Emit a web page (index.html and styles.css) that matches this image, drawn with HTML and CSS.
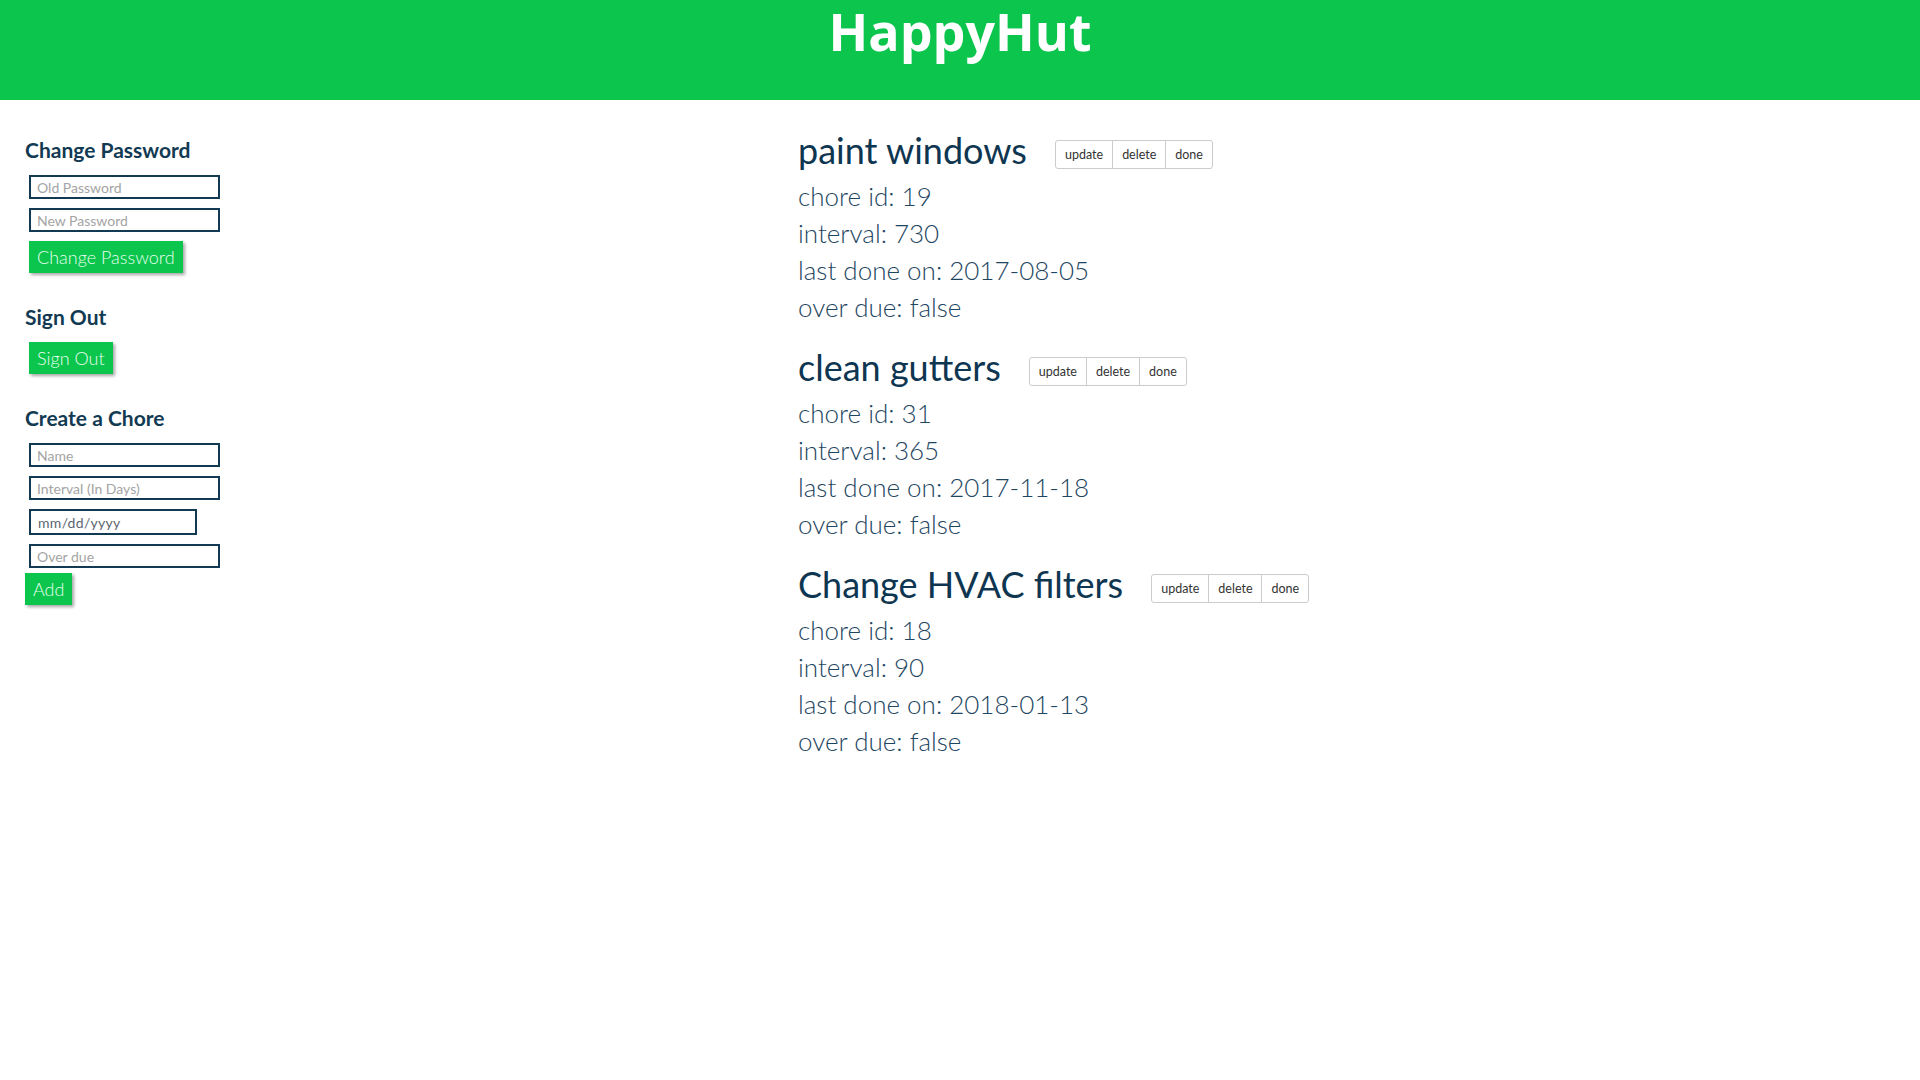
FILE: index.html
```html
<!DOCTYPE html>
<html lang="en">
<head>
<meta charset="utf-8">
<title>HappyHut</title>
<link rel="stylesheet" href="styles.css">
</head>
<body>
<header class="topbar">
  <h1 class="brand">HappyHut</h1>
</header>
<main class="layout">
  <aside class="sidebar">
    <section class="panel">
      <h3 class="panel-title">Change Password</h3>
      <input class="field" type="password" placeholder="Old Password">
      <input class="field" type="password" placeholder="New Password">
      <button class="btn-green">Change Password</button>
    </section>
    <section class="panel">
      <h3 class="panel-title">Sign Out</h3>
      <button class="btn-green">Sign Out</button>
    </section>
    <section class="panel">
      <h3 class="panel-title">Create a Chore</h3>
      <input class="field" type="text" placeholder="Name">
      <input class="field" type="text" placeholder="Interval (In Days)">
      <input class="field field-date" type="text" placeholder="mm/dd/yyyy">
      <input class="field" type="text" placeholder="Over due">
      <button class="btn-green btn-add">Add</button>
    </section>
  </aside>
  <section class="chores">
    <article class="chore">
      <div class="chore-head">
        <h2 class="chore-name">paint windows</h2>
        <div class="btn-group">
          <button class="btn-sm">update</button><button class="btn-sm">delete</button><button class="btn-sm">done</button>
        </div>
      </div>
      <p class="chore-line">chore id: 19</p>
      <p class="chore-line">interval: 730</p>
      <p class="chore-line">last done on: 2017-08-05</p>
      <p class="chore-line">over due: false</p>
    </article>
    <article class="chore">
      <div class="chore-head">
        <h2 class="chore-name">clean gutters</h2>
        <div class="btn-group">
          <button class="btn-sm">update</button><button class="btn-sm">delete</button><button class="btn-sm">done</button>
        </div>
      </div>
      <p class="chore-line">chore id: 31</p>
      <p class="chore-line">interval: 365</p>
      <p class="chore-line">last done on: 2017-11-18</p>
      <p class="chore-line">over due: false</p>
    </article>
    <article class="chore">
      <div class="chore-head">
        <h2 class="chore-name">Change HVAC filters</h2>
        <div class="btn-group">
          <button class="btn-sm">update</button><button class="btn-sm">delete</button><button class="btn-sm">done</button>
        </div>
      </div>
      <p class="chore-line">chore id: 18</p>
      <p class="chore-line">interval: 90</p>
      <p class="chore-line">last done on: 2018-01-13</p>
      <p class="chore-line">over due: false</p>
    </article>
  </section>
</main>
</body>
</html>
```

FILE: styles.css
```css
* { box-sizing: border-box; }

html, body {
  margin: 0;
  padding: 0;
  background: #ffffff;
  font-family: Lato, "Open Sans", sans-serif;
  color: #123a52;
}

.topbar {
  height: 100px;
  background: #0bc54c;
  display: flex;
  justify-content: center;
  align-items: flex-start;
}

.brand {
  margin: 0;
  padding-top: 0;
  font-family: "Open Sans", sans-serif;
  font-weight: 700;
  font-size: 52px;
  line-height: 61px;
  color: #ffffff;
}

.layout {
  display: flex;
  align-items: flex-start;
}

.sidebar {
  width: 798px;
  flex: none;
  padding: 38px 0 0 25px;
  display: flex;
  flex-direction: column;
}

.panel {
  display: flex;
  flex-direction: column;
  align-items: flex-start;
  margin-bottom: 32px;
}

.panel-title {
  margin: 0 0 13px 0;
  font-size: 21px;
  line-height: 24px;
  font-weight: 700;
  color: #123a52;
}

.field {
  width: 191px;
  height: 24px;
  margin: 0 0 9px 4px;
  padding: 0 6px;
  border: 2px solid #123a52;
  border-radius: 0;
  font-family: Lato, sans-serif;
  font-size: 14px;
  color: #333;
  background: #fff;
  outline: none;
}

.field::placeholder {
  color: #a4a4a4;
}

.field-date {
  width: 168px;
  height: 26px;
  padding-left: 7px;
  font-size: 14px;
  letter-spacing: 0.3px;
}

.field-date::placeholder {
  color: #5d6670;
}

.btn-green {
  margin: 0 0 0 4px;
  height: 32px;
  padding: 0 8px;
  border: none;
  border-radius: 0;
  background: #0bc54c;
  color: #e6fff0;
  font-family: Lato, sans-serif;
  font-weight: 300;
  font-size: 18px;
  line-height: 32px;
  box-shadow: 2px 2px 3px rgba(0, 0, 0, 0.35);
  cursor: pointer;
}

.field + .btn-add {
  margin-top: -4px;
  margin-left: 0;
}

.chores {
  flex: 1;
  padding-top: 30px;
}

.chore {
  margin-bottom: 21px;
}

.chore-head {
  display: flex;
  align-items: center;
  height: 40px;
  margin-bottom: 8px;
}

.chore-name {
  margin: 0 28px 0 0;
  font-size: 36px;
  line-height: 40px;
  font-weight: 400;
  color: #0f3651;
}

.btn-group {
  display: flex;
  margin-top: 9px;
}

.btn-sm {
  height: 29px;
  padding: 0 9px;
  margin: 0 0 0 -1px;
  border: 1px solid #cccccc;
  background: #ffffff;
  color: #333333;
  font-family: Lato, sans-serif;
  font-size: 12.5px;
  line-height: 27px;
  border-radius: 0;
  cursor: pointer;
}

.btn-sm:first-child {
  margin-left: 0;
  border-radius: 3px 0 0 3px;
}

.btn-sm:last-child {
  border-radius: 0 3px 3px 0;
}

.chore-line {
  margin: 0;
  font-size: 26px;
  line-height: 37px;
  font-weight: 300;
  color: #1e4661;
}
```
